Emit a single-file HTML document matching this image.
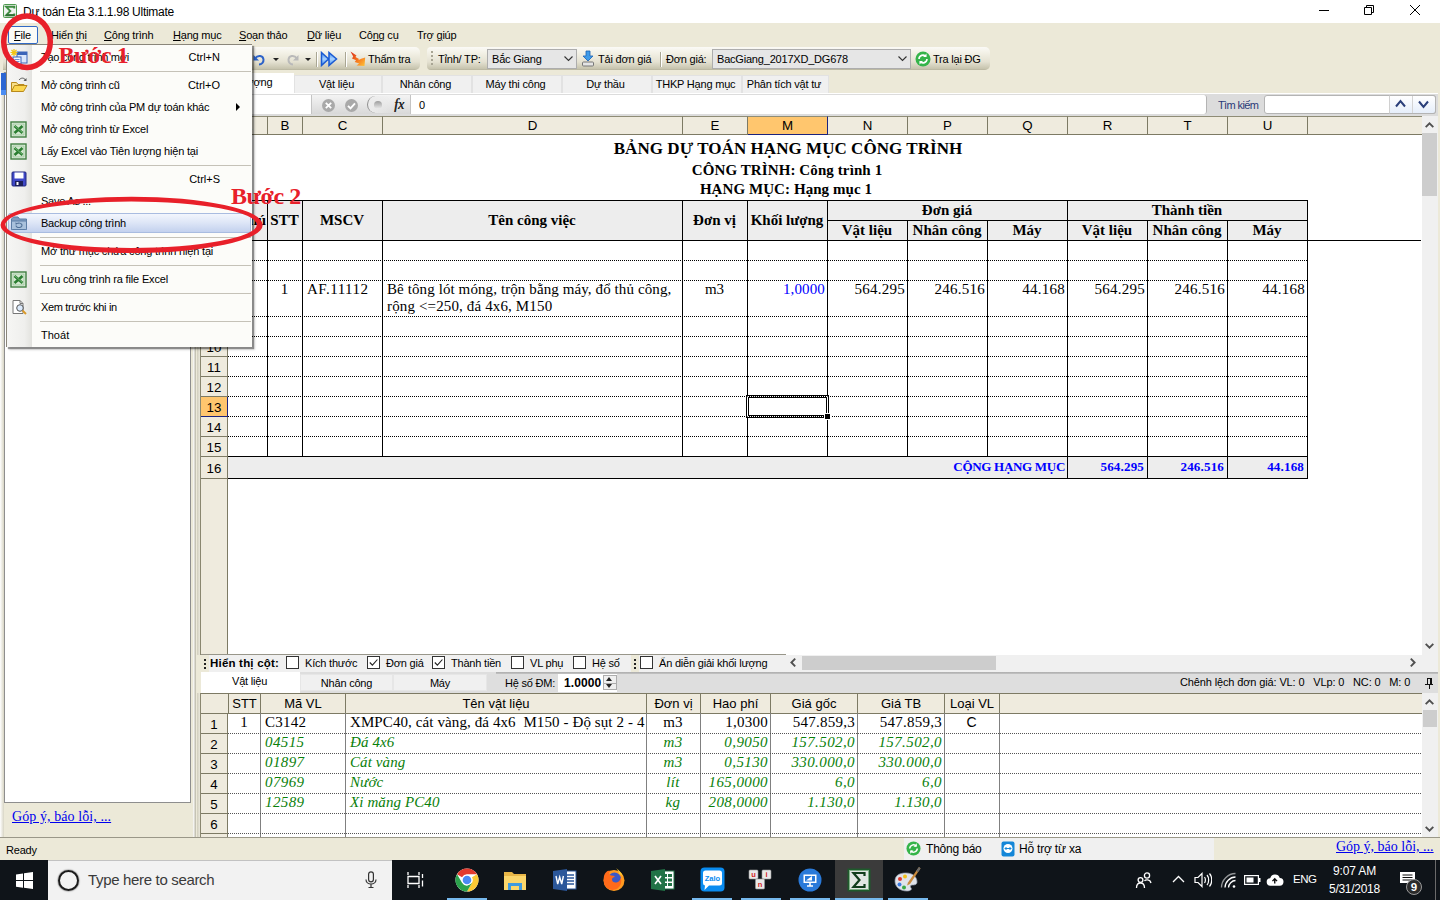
<!DOCTYPE html>
<html lang="vi">
<head>
<meta charset="utf-8">
<title>Dự toán Eta 3.1.1.98 Ultimate</title>
<style>
*{box-sizing:border-box;margin:0;padding:0}
html,body{width:1440px;height:900px;overflow:hidden;background:#ece9d8}
body{position:relative;font-family:"Liberation Sans",sans-serif;font-size:11px;color:#000;letter-spacing:-.2px}
.ser,.c,.hd,.ch,.rh,.lh,.lr,#taskbar,#title{letter-spacing:0}
.abs{position:absolute}
.t{position:absolute;white-space:nowrap;line-height:1}
.ser{font-family:"Liberation Serif",serif}
u{text-decoration:underline}
/* ---------- title bar ---------- */
#title{left:0;top:0;width:1440px;height:23px;background:#fff}
/* ---------- menubar ---------- */
#menubar{left:0;top:23px;width:1440px;height:23px;background:#ece9d8}
#menubar .t{top:7px;font-size:11px}
/* ---------- toolbars ---------- */
.tb{background:linear-gradient(#fbfaf6,#f1efe4 30%,#e4e1d1 65%,#c6c3ad 95%,#b5b29c);border-radius:0 5px 5px 0}
.combo{background:#e6e6e6;border:1px solid #adadad;height:20px}
.combo .t{top:4px;left:4px;font-size:11px}
/* ---------- tabs ---------- */
.tab{position:absolute;top:75px;height:18px;background:#f0f0f0;border:1px solid #e2e2e2;border-bottom:none;padding-right:3px;text-align:center;font-size:11px;line-height:17px;white-space:nowrap}
/* ---------- grid ---------- */
.ch{position:absolute;top:116px;height:19px;background:#efebde;border-top:1px solid #8f8c76;border-right:1px solid #7d7a64;border-bottom:1px solid #7d7a64;text-align:center;font-size:13.300px;line-height:17px}
.rh{position:absolute;left:201px;width:27px;background:#efebde;border-right:1px solid #7d7a64;border-bottom:1px solid #7d7a64;text-align:center;font-size:13.300px;}
.vl{position:absolute;width:1px;background:#000}
.hl{position:absolute;height:1px;background:#000}
.dl{position:absolute;height:1px;background-image:linear-gradient(90deg,#000 50%,transparent 50%);background-size:2px 1px}
.hd{position:absolute;font-family:"Liberation Serif",serif;font-weight:bold;font-size:15px;text-align:center;white-space:nowrap;line-height:1}
.c{position:absolute;font-family:"Liberation Serif",serif;font-size:15px;white-space:nowrap;line-height:1}
.r{text-align:right}
.ctr{text-align:center}
/* lower grid */
.lh{position:absolute;top:693px;height:21px;background:#efebde;border-right:1px solid #7d7a64;border-bottom:1px solid #7d7a64;text-align:center;font-size:13px;line-height:22px;white-space:nowrap}
.lr{position:absolute;left:201px;width:27px;height:20px;background:#efebde;border-right:1px solid #7d7a64;border-bottom:1px solid #7d7a64;text-align:center;font-size:13.300px;line-height:21px}
.g{color:#0a800a;font-style:italic}
.dlg{position:absolute;height:1px;background-image:linear-gradient(90deg,#555 50%,transparent 50%);background-size:2px 1px}
.vlg{position:absolute;width:1px;background:#808080}
/* menu */
#menu{left:6px;top:44px;width:246px;height:303px;background:#fcfcf9;border:1px solid #8a867a;border-right:none;border-bottom:none;box-shadow:2px 2px 1px rgba(0,0,0,.36),3px 3px 2px rgba(0,0,0,.16)}
#menu .strip{position:absolute;left:0;top:0;width:25px;height:100%;background:linear-gradient(90deg,#f6f6f4,#efefed 70%,#e2e2de)}
#menu .mi{position:absolute;left:34px;font-size:11px;white-space:nowrap;line-height:1}
#menu .sc{position:absolute;right:32px;letter-spacing:0;font-size:11px;white-space:nowrap;line-height:1}
#menu .sep{position:absolute;left:33px;right:1px;height:1px;background:#c5c2b8}
/* taskbar */
#taskbar{left:0;top:860px;width:1440px;height:40px;background:#0f1419}
</style>
</head>
<body>

<!-- ================= TITLE BAR ================= -->
<div id="title" class="abs">
  <svg class="abs" style="left:3px;top:4px" width="14" height="14" viewBox="0 0 14 14"><rect x=".5" y=".5" width="13" height="13" rx="1" fill="#eef2ee" stroke="#4f9a50"/><path d="M11.300 4.600V2.800H3.200L7.300 7 3.200 11.200h8.100V9.400" fill="none" stroke="#3f8c41" stroke-width="1.900"/><path d="M3.200 11.200h8.100" stroke="#2f6f33" stroke-width="1.900"/></svg>
  <div class="t" style="left:23px;top:6px;font-size:12px;letter-spacing:-.27px">Dự toán Eta 3.1.1.98 Ultimate</div>
  <svg class="abs" style="left:1300px;top:0" width="140" height="23" viewBox="0 0 140 23" fill="none" stroke="#000" stroke-width="1">
    <path d="M19 10.5h10"/>
    <path d="M64.5 7.5h7v7h-7z M66.500 7.500v-2h7v7h-2"/>
    <path d="M110 5l10 10M120 5l-10 10"/>
  </svg>
</div>

<!-- ================= MENU BAR ================= -->
<div id="menubar" class="abs">
  <div class="abs" style="left:8px;top:3px;width:30px;height:18px;border:1px solid #316ac5;border-radius:2px;background:#fbfbf7"></div>
  <div class="t" style="left:14px"><u>F</u>ile</div>
  <div class="t" style="left:51px">Hiển <u>t</u>hị</div>
  <div class="t" style="left:104px"><u>C</u>ông trình</div>
  <div class="t" style="left:173px"><u>H</u>ạng mục</div>
  <div class="t" style="left:239px"><u>S</u>oạn thảo</div>
  <div class="t" style="left:307px"><u>D</u>ữ liệu</div>
  <div class="t" style="left:359px">Cô<u>n</u>g cụ</div>
  <div class="t" style="left:417px">Trợ <u>g</u>iúp</div>
</div>

<!-- ================= TOOLBARS ================= -->
<div class="abs tb" style="left:3px;top:47px;width:417px;height:23px"></div>
<div class="abs tb" style="left:427px;top:47px;width:563px;height:23px;border-radius:4px 5px 5px 4px"></div>
<div id="toolbar-items">
  <!-- undo / redo -->
  <svg class="abs" style="left:252px;top:51px" width="16" height="16" viewBox="0 0 16 16"><path d="M3 7.500c3-4 8-3 8.500 1 .3 3-2 5-4.500 5" fill="none" stroke="#2c62c8" stroke-width="2"/><path d="M1.500 4v5.500h5.500z" fill="#2c62c8"/></svg>
  <div class="abs" style="left:273px;top:58px;border:3px solid transparent;border-top:3px solid #222;width:0;height:0"></div>
  <svg class="abs" style="left:284px;top:51px" width="16" height="16" viewBox="0 0 16 16"><path d="M13 7.500c-3-4-8-3-8.500 1-.3 3 2 5 4.500 5" fill="none" stroke="#b9b9b9" stroke-width="2"/><path d="M14.500 4v5.500h-5.500z" fill="#b9b9b9"/></svg>
  <div class="abs" style="left:305px;top:58px;border:3px solid transparent;border-top:3px solid #222;width:0;height:0"></div>
  <div class="abs" style="left:316px;top:52px;width:2px;height:15px;background:linear-gradient(90deg,#a9a693 50%,#fff 50%)"></div>
  <svg class="abs" style="left:320px;top:51px" width="18" height="16" viewBox="0 0 18 16"><defs><linearGradient id="ffg" x1="0" y1="0" x2="0" y2="1"><stop offset="0" stop-color="#3f8df0"/><stop offset=".5" stop-color="#a9d2ff"/><stop offset="1" stop-color="#3f8df0"/></linearGradient></defs><path d="M1.500 1.500l7 6.500-7 6.500zM9 1.500l7.500 6.500-7.500 6.500z" fill="url(#ffg)" stroke="#1a5ad2" stroke-width="1.500"/></svg>
  <div class="abs" style="left:345px;top:52px;width:2px;height:15px;background:linear-gradient(90deg,#a9a693 50%,#fff 50%)"></div>
  <svg class="abs" style="left:350px;top:51px" width="16" height="16" viewBox="0 0 16 16"><defs><linearGradient id="ttg" x1="0" y1="0" x2="1" y2="1"><stop offset="0" stop-color="#d8281c"/><stop offset=".55" stop-color="#f7791e"/><stop offset="1" stop-color="#ffc63a"/></linearGradient></defs><path d="M.5.500l6 4-1 1.500 3.500 2-.8 1.300 3-1.500 4-1.300-.7 8.500-8-.5 2.700-2-4.500-1.500 1.300-1.800-4-1.800 1.200-2z" fill="url(#ttg)"/></svg>
  <div class="t" style="left:368px;top:54px;font-size:11px">Thẩm tra</div>
  <!-- toolbar 2 -->
  <div class="abs" style="left:431px;top:51px;width:2px;height:16px;background-image:linear-gradient(#a8a594 50%,transparent 50%);background-size:2px 4px"></div>
  <div class="t" style="left:438px;top:54px;font-size:11px">Tỉnh/ TP:</div>
  <div class="abs combo" style="left:487px;top:49px;width:90px"><div class="t">Bắc Giang</div>
    <svg class="abs" style="right:3px;top:6px" width="9" height="6" viewBox="0 0 9 6"><path d="M.5.500l4 4 4-4" fill="none" stroke="#333" stroke-width="1.100"/></svg></div>
  <svg class="abs" style="left:581px;top:50px" width="14" height="17" viewBox="0 0 14 17"><path d="M5 1h4v5h3l-5 5-5-5h3z" fill="#3f9be8" stroke="#1d62b5" stroke-width=".8"/><rect x="1.500" y="12" width="11" height="4" rx="1" fill="#e4e4e4" stroke="#777"/></svg>
  <div class="t" style="left:598px;top:54px;font-size:11px">Tải đơn giá</div>
  <div class="abs" style="left:660px;top:52px;width:2px;height:15px;background:linear-gradient(90deg,#a9a693 50%,#fff 50%)"></div>
  <div class="t" style="left:666px;top:54px;font-size:11px">Đơn giá:</div>
  <div class="abs combo" style="left:712px;top:49px;width:199px"><div class="t">BacGiang_2017XD_DG678</div>
    <svg class="abs" style="right:3px;top:6px" width="9" height="6" viewBox="0 0 9 6"><path d="M.5.500l4 4 4-4" fill="none" stroke="#333" stroke-width="1.100"/></svg></div>
  <svg class="abs" style="left:915px;top:51px" width="16" height="16" viewBox="0 0 16 16"><circle cx="8" cy="8" r="7.500" fill="#35b44a"/><path d="M4 8a4 4 0 0 1 7-2.500M12 8a4 4 0 0 1-7 2.500" fill="none" stroke="#fff" stroke-width="1.600"/><path d="M11.500 2.500v3.500h-3.500zM4.500 13.500v-3.500h3.500z" fill="#fff"/></svg>
  <div class="t" style="left:933px;top:54px;font-size:11px">Tra lại ĐG</div>
</div>

<!-- ================= LEFT PANEL ================= -->
<div class="abs" style="left:0;top:72px;width:197px;height:766px;background:#ece9d8"></div>
<div class="abs" style="left:0;top:72px;width:4px;height:766px;background:linear-gradient(90deg,#fff,#d8d5c4)"></div>
<div class="abs" style="left:4px;top:72px;width:187px;height:731px;background:#fff;border:1px solid #8e8e8e"></div>
<div class="abs" style="left:1px;top:73px;width:11px;height:22px;background:linear-gradient(#2c66d2 75%,#4a8cf2 75%)"></div>
<div class="t ser" style="left:12px;top:810px;font-size:14px;letter-spacing:.08px;color:#0000ee;text-decoration:underline">Góp ý, báo lỗi, ...</div>
<div class="abs" style="left:193px;top:72px;width:3px;height:766px;background:linear-gradient(90deg,#fff,#bab7a6)"></div>

<!-- ================= SHEET TABS ================= -->
<div id="tabs">
  <div class="abs" style="left:197px;top:93px;width:1243px;height:1px;background:#fff"></div>
  <div class="abs" style="left:201px;top:73px;width:93px;height:21px;background:#fff"></div>
  <div class="t" style="left:221px;top:77px;font-size:11px">Tiên lượng</div>
  <div class="tab" style="left:294px;width:88px">Vật liệu</div>
  <div class="tab" style="left:382px;width:90px">Nhân công</div>
  <div class="tab" style="left:472px;width:90px">Máy thi công</div>
  <div class="tab" style="left:562px;width:90px">Dự thầu</div>
  <div class="tab" style="left:652px;width:90px">THKP Hạng mục</div>
  <div class="tab" style="left:742px;width:87px">Phân tích vật tư</div>
</div>
<!-- ================= FORMULA BAR ================= -->
<div id="fbar">
  <div class="abs" style="left:197px;top:94px;width:1243px;height:22px;background:#dcdcdc"></div>
  <div class="abs" style="left:201px;top:95px;width:110px;height:19px;background:#fff"></div>
  <div class="abs" style="left:311px;top:95px;width:100px;height:19px;background:linear-gradient(#f4f4f4,#d8d8d8);border-left:1px solid #c4c4c4;border-right:1px solid #c4c4c4"></div>
  <svg class="abs" style="left:321px;top:98px" width="15" height="15" viewBox="0 0 15 15"><circle cx="7.500" cy="7.500" r="6.500" fill="#a9a9a9"/><path d="M4.800 4.800l5.400 5.400M10.200 4.800l-5.400 5.400" stroke="#fff" stroke-width="1.800"/></svg>
  <svg class="abs" style="left:344px;top:98px" width="15" height="15" viewBox="0 0 15 15"><circle cx="7.500" cy="7.500" r="6.500" fill="#a9a9a9"/><path d="M4 7.800l2.500 2.500 4.500-5" fill="none" stroke="#fff" stroke-width="1.900"/></svg>
  <div class="abs" style="left:367px;top:96px;width:30px;height:17px;border-left:1px solid #8f8f8f;border-radius:9px 0 0 9px;background:linear-gradient(90deg,#ececec,rgba(236,236,236,0))"></div>
  <div class="abs" style="left:374px;top:101px;width:8px;height:8px;border-radius:50%;background:linear-gradient(#9d9d9d,#ececec)"></div>
  <div class="t ser" style="left:394px;top:98px;font-size:14px;font-style:italic;color:#222;text-shadow:.4px 0 0 #222">fx</div>
  <div class="abs" style="left:411px;top:95px;width:796px;height:19px;background:#fff;border-radius:0 3px 3px 0;border-right:1px solid #b4b4b4"></div>
  <div class="t" style="left:419px;top:100px;font-size:11px">0</div>
  <div class="t" style="left:1218px;top:100px;font-size:11px;letter-spacing:-.6px;color:#2a3a78">Tìm kiếm</div>
  <div class="abs" style="left:1264px;top:95px;width:172px;height:19px;background:#fff;border:1px solid #b4b4b4;border-radius:3px"></div>
  <div class="abs" style="left:1389px;top:95px;width:47px;height:19px;background:linear-gradient(#fff,#e6eefa);border:1px solid #b4b4b4;border-left-color:#d0d0d0;border-radius:0 3px 3px 0"></div>
  <div class="abs" style="left:1412px;top:96px;width:1px;height:17px;background:#d4d4d4"></div>
  <svg class="abs" style="left:1395px;top:99px" width="11" height="9" viewBox="0 0 11 9"><path d="M1 7.500l4.500-5.500 4.500 5.500" fill="none" stroke="#2b3f7a" stroke-width="2"/></svg>
  <svg class="abs" style="left:1418px;top:100px" width="11" height="9" viewBox="0 0 11 9"><path d="M1 1.500l4.500 5.500 4.500-5.500" fill="none" stroke="#2b3f7a" stroke-width="2"/></svg>
</div>

<!-- ================= MAIN GRID ================= -->
<div id="grid">
<div class="abs" style="left:197px;top:116px;width:4px;height:539px;background:linear-gradient(90deg,#d0cdbc,#f4f2e8)"></div>
<div class="abs" style="left:200px;top:116px;width:1px;height:539px;background:#8a8770"></div>
<div class="abs" style="left:201px;top:116px;width:1221px;height:539px;background:#fff"></div>
<div class="abs" style="left:201px;top:116px;width:1221px;height:19px;background:#efebde;border-top:1px solid #8f8c76;border-bottom:1px solid #7d7a64"></div>
<div class="ch" style="left:201px;width:27px"></div>
<div class="ch" style="left:228px;width:40px">A</div>
<div class="ch" style="left:268px;width:35px">B</div>
<div class="ch" style="left:303px;width:80px">C</div>
<div class="ch" style="left:383px;width:300px">D</div>
<div class="ch" style="left:683px;width:65px">E</div>
<div class="ch" style="left:748px;width:80px;background:#ffc66e;border-bottom:1px solid #1a237e;border-right:1px solid #1a237e">M</div>
<div class="ch" style="left:828px;width:80px">N</div>
<div class="ch" style="left:908px;width:80px">P</div>
<div class="ch" style="left:988px;width:80px">Q</div>
<div class="ch" style="left:1068px;width:80px">R</div>
<div class="ch" style="left:1148px;width:80px">T</div>
<div class="ch" style="left:1228px;width:80px">U</div>
<div class="abs" style="left:201px;top:135px;width:27px;height:520px;background:#efebde;border-right:1px solid #7d7a64"></div>
<div class="rh" style="top:337px;height:20px;line-height:21px">10</div>
<div class="rh" style="top:357px;height:20px;line-height:21px">11</div>
<div class="rh" style="top:377px;height:20px;line-height:21px">12</div>
<div class="rh" style="top:397px;height:20px;line-height:21px;background:#ffc66e;border-bottom:1px solid #1a237e;border-right:1px solid #1a237e">13</div>
<div class="rh" style="top:417px;height:20px;line-height:21px">14</div>
<div class="rh" style="top:437px;height:20px;line-height:21px">15</div>
<div class="rh" style="top:457px;height:22px;line-height:23px">16</div>
<div class="abs" style="left:201px;top:336px;width:27px;height:1px;background:#7d7a64"></div>
<div class="hd" style="left:488px;width:600px;top:140px;font-size:17px;letter-spacing:.05px">BẢNG DỰ TOÁN HẠNG MỤC CÔNG TRÌNH</div>
<div class="hd" style="left:487px;width:600px;top:163px;font-size:15px;letter-spacing:.1px">CÔNG TRÌNH: Công trình 1</div>
<div class="hd" style="left:486px;width:600px;top:182px;font-size:15px;letter-spacing:.07px">HẠNG MỤC: Hạng mục 1</div>
<div class="abs" style="left:228px;top:200px;width:1080px;height:41px;background:#ededed"></div>
<div class="abs" style="left:228px;top:457px;width:1080px;height:22px;background:#ededed"></div>
<div class="hl" style="left:228px;top:200px;width:1080px"></div>
<div class="hl" style="left:827px;top:220px;width:481px"></div>
<div class="hl" style="left:228px;top:240px;width:1193px"></div>
<div class="hl" style="left:228px;top:456px;width:1080px"></div>
<div class="hl" style="left:228px;top:478px;width:1080px"></div>
<div class="dl" style="left:228px;top:260px;width:1080px"></div>
<div class="dl" style="left:228px;top:280px;width:1080px"></div>
<div class="dl" style="left:228px;top:316px;width:1080px"></div>
<div class="dl" style="left:228px;top:336px;width:1080px"></div>
<div class="dl" style="left:228px;top:356px;width:1080px"></div>
<div class="dl" style="left:228px;top:376px;width:1080px"></div>
<div class="dl" style="left:228px;top:396px;width:1080px"></div>
<div class="dl" style="left:228px;top:416px;width:1080px"></div>
<div class="dl" style="left:228px;top:436px;width:1080px"></div>
<div class="vl" style="left:267px;top:200px;height:257px"></div>
<div class="vl" style="left:302px;top:200px;height:257px"></div>
<div class="vl" style="left:382px;top:200px;height:257px"></div>
<div class="vl" style="left:682px;top:200px;height:257px"></div>
<div class="vl" style="left:747px;top:200px;height:257px"></div>
<div class="vl" style="left:827px;top:200px;height:257px"></div>
<div class="vl" style="left:907px;top:220px;height:237px"></div>
<div class="vl" style="left:987px;top:220px;height:237px"></div>
<div class="vl" style="left:1147px;top:220px;height:237px"></div>
<div class="vl" style="left:1227px;top:220px;height:237px"></div>
<div class="vl" style="left:1067px;top:200px;height:279px"></div>
<div class="vl" style="left:1307px;top:200px;height:279px"></div>
<div class="vl" style="left:1147px;top:457px;height:22px"></div>
<div class="vl" style="left:1227px;top:457px;height:22px"></div>
<div class="abs" style="left:229px;top:201px;width:38px;height:39px;overflow:hidden"><div class="hd" style="right:1px;top:12px">Ghi chú</div></div>
<div class="hd" style="left:267px;width:35px;top:213px;font-size:15px">STT</div>
<div class="hd" style="left:302px;width:80px;top:213px;font-size:15px">MSCV</div>
<div class="hd" style="left:382px;width:300px;top:213px;font-size:15px">Tên công việc</div>
<div class="hd" style="left:682px;width:65px;top:213px;font-size:15px">Đơn vị</div>
<div class="hd" style="left:747px;width:80px;top:213px;font-size:15px">Khối lượng</div>
<div class="hd" style="left:827px;width:240px;top:203px;font-size:15px">Đơn giá</div>
<div class="hd" style="left:1067px;width:240px;top:203px;font-size:15px">Thành tiền</div>
<div class="hd" style="left:827px;width:80px;top:223px;font-size:15px">Vật liệu</div>
<div class="hd" style="left:907px;width:80px;top:223px;font-size:15px">Nhân công</div>
<div class="hd" style="left:987px;width:80px;top:223px;font-size:15px">Máy</div>
<div class="hd" style="left:1067px;width:80px;top:223px;font-size:15px">Vật liệu</div>
<div class="hd" style="left:1147px;width:80px;top:223px;font-size:15px">Nhân công</div>
<div class="hd" style="left:1227px;width:80px;top:223px;font-size:15px">Máy</div>
<div class="c ctr" style="left:267px;width:35px;top:282px">1</div>
<div class="c" style="left:307px;top:282px;letter-spacing:.5px">AF.11112</div>
<div class="c" style="left:387px;top:282px;letter-spacing:.1px">Bê tông lót móng, trộn bằng máy, đổ thủ công,</div>
<div class="c" style="left:387px;top:299px;letter-spacing:.14px">rộng &lt;=250, đá 4x6, M150</div>
<div class="c ctr" style="left:682px;width:65px;top:282px">m3</div>
<div class="c r" style="left:747px;width:78px;top:282px;letter-spacing:.14px;color:#0000ff">1,0000</div>
<div class="c r" style="left:827px;width:78px;top:282px;letter-spacing:.24px">564.295</div>
<div class="c r" style="left:907px;width:78px;top:282px;letter-spacing:.24px">246.516</div>
<div class="c r" style="left:987px;width:78px;top:282px;letter-spacing:.24px">44.168</div>
<div class="c r" style="left:1067px;width:78px;top:282px;letter-spacing:.24px">564.295</div>
<div class="c r" style="left:1147px;width:78px;top:282px;letter-spacing:.24px">246.516</div>
<div class="c r" style="left:1227px;width:78px;top:282px;letter-spacing:.24px">44.168</div>
<div class="c r" style="left:867px;width:198px;top:460px;font-size:13px;font-weight:bold;letter-spacing:-.3px;color:#0000ff">CỘNG HẠNG MỤC</div>
<div class="c r" style="left:1067px;width:77px;top:460px;font-size:13px;font-weight:bold;letter-spacing:.18px;color:#0000ff">564.295</div>
<div class="c r" style="left:1147px;width:77px;top:460px;font-size:13px;font-weight:bold;letter-spacing:.18px;color:#0000ff">246.516</div>
<div class="c r" style="left:1227px;width:77px;top:460px;font-size:13px;font-weight:bold;letter-spacing:.18px;color:#0000ff">44.168</div>
<div class="abs" style="left:746px;top:395px;width:83px;height:23px;border:1px solid #000;background:#fff"></div>
<div class="abs" style="left:747px;top:396px;width:81px;height:21px;border-top:1px dotted #000;border-bottom:1px dotted #000;border-left:1px solid #fff;border-right:1px solid #fff"></div>
<div class="abs" style="left:748px;top:397px;width:79px;height:19px;border:1px solid #000;background:#fff"></div>
<div class="abs" style="left:824px;top:413px;width:7px;height:7px;background:#000;border:1px solid #fff"></div>
<div class="abs" style="left:1422px;top:116px;width:16px;height:556px;background:#f0f0f0"></div>
<div class="abs" style="left:1422px;top:133px;width:15px;height:63px;background:#cdcdcd"></div>
<svg class="abs" style="left:1425px;top:122px" width="9" height="6" viewBox="0 0 9 6"><path d="M.7 5.200l3.800-3.800 3.800 3.800" fill="none" stroke="#505050" stroke-width="1.900"/></svg>
<svg class="abs" style="left:1425px;top:643px" width="9" height="6" viewBox="0 0 9 6"><path d="M.7.800l3.800 3.800 3.800-3.800" fill="none" stroke="#505050" stroke-width="1.900"/></svg>
<div class="abs" style="left:1438px;top:72px;width:2px;height:766px;background:#ece9d8"></div>
</div>

<!-- ================= LOWER PANE ================= -->
<div id="lower">
<div class="abs" style="left:197px;top:655px;width:4px;height:38px;background:#ece9d8"></div>
<div class="abs" style="left:201px;top:655px;width:585px;height:17px;background:#f0f0f0"></div>
<div class="abs" style="left:201px;top:654px;width:585px;height:1px;background:#98968a"></div>
<div class="abs" style="left:201px;top:655px;width:8px;height:17px;background:#ece9d8"></div>
<div class="abs" style="left:631px;top:655px;width:8px;height:17px;background:#ece9d8"></div>
<div class="abs" style="left:204px;top:659px;width:2px;height:10px;background-image:linear-gradient(#222 50%,transparent 50%);background-size:2px 4px"></div>
<div class="t" style="left:210px;top:658px;font-size:11.500px;font-weight:bold;letter-spacing:.2px">Hiển thị cột:</div>
<div class="abs" style="left:286px;top:656px;width:13px;height:13px;background:#fff;border:1px solid #333"></div>
<div class="t" style="left:305px;top:658px;font-size:11px">Kích thước</div>
<div class="abs" style="left:367px;top:656px;width:13px;height:13px;background:#fff;border:1px solid #333"></div>
<svg class="abs" style="left:367px;top:656px" width="13" height="13" viewBox="0 0 13 13"><path d="M2.800 6.500l2.600 2.700 5-5.700" fill="none" stroke="#222" stroke-width="1.100"/></svg>
<div class="t" style="left:386px;top:658px;font-size:11px">Đơn giá</div>
<div class="abs" style="left:432px;top:656px;width:13px;height:13px;background:#fff;border:1px solid #333"></div>
<svg class="abs" style="left:432px;top:656px" width="13" height="13" viewBox="0 0 13 13"><path d="M2.800 6.500l2.600 2.700 5-5.700" fill="none" stroke="#222" stroke-width="1.100"/></svg>
<div class="t" style="left:451px;top:658px;font-size:11px">Thành tiền</div>
<div class="abs" style="left:511px;top:656px;width:13px;height:13px;background:#fff;border:1px solid #333"></div>
<div class="t" style="left:530px;top:658px;font-size:11px">VL phụ</div>
<div class="abs" style="left:573px;top:656px;width:13px;height:13px;background:#fff;border:1px solid #333"></div>
<div class="t" style="left:592px;top:658px;font-size:11px">Hệ số</div>
<div class="abs" style="left:634px;top:659px;width:2px;height:10px;background-image:linear-gradient(#222 50%,transparent 50%);background-size:2px 4px"></div>
<div class="abs" style="left:640px;top:656px;width:13px;height:13px;background:#fff;border:1px solid #333"></div>
<div class="t" style="left:659px;top:658px;font-size:11px">Ẩn diễn giải khối lượng</div>
<div class="abs" style="left:786px;top:655px;width:636px;height:17px;background:#f0f0f0"></div>
<div class="abs" style="left:802px;top:656px;width:194px;height:14px;background:#cdcdcd"></div>
<svg class="abs" style="left:790px;top:658px" width="6" height="9" viewBox="0 0 6 9"><path d="M5.200.700l-3.800 3.800 3.800 3.800" fill="none" stroke="#505050" stroke-width="1.900"/></svg>
<svg class="abs" style="left:1410px;top:658px" width="6" height="9" viewBox="0 0 6 9"><path d="M.800.700l3.800 3.800-3.800 3.800" fill="none" stroke="#505050" stroke-width="1.900"/></svg>
<div class="abs" style="left:201px;top:672px;width:1237px;height:21px;background:#dedede"></div>
<div class="abs" style="left:496px;top:672px;width:942px;height:2px;background:linear-gradient(#adadad,#c4c4c4)"></div>
<div class="abs" style="left:201px;top:672px;width:99px;height:21px;background:#fff"></div>
<div class="t" style="left:232px;top:676px;font-size:11px">Vật liệu</div>
<div class="abs" style="left:300px;top:674px;width:93px;height:17px;background:#f0f0f0;border:1px solid #e6e6e6;text-align:center;line-height:16px;font-size:11px">Nhân công</div>
<div class="abs" style="left:393px;top:674px;width:94px;height:17px;background:#f0f0f0;border:1px solid #e6e6e6;text-align:center;line-height:16px;font-size:11px">Máy</div>
<div class="t" style="left:505px;top:678px;font-size:11px">Hệ số ĐM:</div>
<div class="abs" style="left:558px;top:674px;width:59px;height:18px;background:#fff"></div>
<div class="t" style="left:564px;top:677px;font-size:12px;font-weight:bold;letter-spacing:.1px">1.0000</div>
<div class="abs" style="left:603px;top:675px;width:14px;height:15px;background:linear-gradient(#f0f0f0 0 7px,#adadad 7px 8px,#f0f0f0 8px);border:1px solid #adadad"></div>
<div class="abs" style="left:606px;top:677px;border:3px solid transparent;border-top:none;border-bottom:4px solid #222;width:0;height:0"></div>
<div class="abs" style="left:606px;top:684px;border:3px solid transparent;border-bottom:none;border-top:4px solid #222;width:0;height:0"></div>
<div class="t" style="left:1180px;top:677px;font-size:11px;letter-spacing:-.13px">Chênh lệch đơn giá: VL: 0&nbsp;&nbsp; VLp: 0&nbsp;&nbsp; NC: 0&nbsp;&nbsp; M: 0</div>
<svg class="abs" style="left:1424px;top:677px" width="10" height="12" viewBox="0 0 10 12" shape-rendering="crispEdges"><path d="M3.500 1.500h4v6h-4zM6.500 1.500v6M1 7.500h8M5.500 7.500v4" fill="none" stroke="#111" stroke-width="1"/></svg>
<div class="abs" style="left:197px;top:693px;width:4px;height:145px;background:linear-gradient(90deg,#d0cdbc,#f4f2e8)"></div>
<div class="abs" style="left:200px;top:693px;width:1px;height:145px;background:#8a8770"></div>
<div class="abs" style="left:201px;top:693px;width:1221px;height:145px;background:#fff"></div>
<div class="abs" style="left:201px;top:693px;width:1221px;height:1px;background:#7d7a64;z-index:2"></div>
<div class="abs" style="left:201px;top:693px;width:1221px;height:21px;background:#efebde;border-bottom:1px solid #7d7a64"></div>
<div class="lh" style="left:201px;width:28px"></div>
<div class="lh" style="left:229px;width:32px">STT</div>
<div class="lh" style="left:261px;width:85px">Mã VL</div>
<div class="lh" style="left:346px;width:301px">Tên vật liệu</div>
<div class="lh" style="left:647px;width:54px">Đơn vị</div>
<div class="lh" style="left:701px;width:70px">Hao phí</div>
<div class="lh" style="left:771px;width:87px">Giá gốc</div>
<div class="lh" style="left:858px;width:87px">Giá TB</div>
<div class="lh" style="left:945px;width:55px">Loại VL</div>
<div class="abs" style="left:201px;top:714px;width:27px;height:124px;background:#efebde;border-right:1px solid #7d7a64"></div>
<div class="lr" style="top:714px">1</div>
<div class="lr" style="top:734px">2</div>
<div class="lr" style="top:754px">3</div>
<div class="lr" style="top:774px">4</div>
<div class="lr" style="top:794px">5</div>
<div class="lr" style="top:814px">6</div>
<div class="vlg" style="left:260px;top:713px;height:125px"></div>
<div class="vlg" style="left:345px;top:713px;height:125px"></div>
<div class="vlg" style="left:646px;top:713px;height:125px"></div>
<div class="vlg" style="left:700px;top:713px;height:125px"></div>
<div class="vlg" style="left:770px;top:713px;height:125px"></div>
<div class="vlg" style="left:857px;top:713px;height:125px"></div>
<div class="vlg" style="left:944px;top:713px;height:125px"></div>
<div class="vlg" style="left:999px;top:713px;height:125px"></div>
<div class="dlg" style="left:228px;top:733px;width:1194px"></div>
<div class="dlg" style="left:228px;top:753px;width:1194px"></div>
<div class="dlg" style="left:228px;top:773px;width:1194px"></div>
<div class="dlg" style="left:228px;top:793px;width:1194px"></div>
<div class="dlg" style="left:228px;top:813px;width:1194px"></div>
<div class="dlg" style="left:228px;top:833px;width:1194px"></div>
<div class="c ctr" style="left:228px;width:32px;top:715px">1</div>
<div class="c" style="left:265px;top:715px;letter-spacing:.25px">C3142</div>
<div class="c" style="left:350px;top:715px;letter-spacing:.1px">XMPC40, cát vàng, đá 4x6&nbsp; M150 - Độ sụt 2 - 4</div>
<div class="c ctr" style="left:646px;width:54px;top:715px;letter-spacing:.25px">m3</div>
<div class="c r" style="left:700px;width:68px;top:715px;letter-spacing:.25px">1,0300</div>
<div class="c r" style="left:770px;width:85px;top:715px;letter-spacing:.25px">547.859,3</div>
<div class="c r" style="left:857px;width:85px;top:715px;letter-spacing:.25px">547.859,3</div>
<div class="c ctr" style="left:944px;width:55px;top:715px;font-family:'Liberation Sans',sans-serif;font-size:14px">C</div>
<div class="c g" style="left:265px;top:735px;letter-spacing:.4px">04515</div>
<div class="c g" style="left:350px;top:735px;letter-spacing:.1px">Đá 4x6</div>
<div class="c g ctr" style="left:646px;width:54px;top:735px;letter-spacing:.4px">m3</div>
<div class="c g r" style="left:700px;width:68px;top:735px;letter-spacing:.4px">0,9050</div>
<div class="c g r" style="left:770px;width:85px;top:735px;letter-spacing:.4px">157.502,0</div>
<div class="c g r" style="left:857px;width:85px;top:735px;letter-spacing:.4px">157.502,0</div>
<div class="c g" style="left:265px;top:755px;letter-spacing:.4px">01897</div>
<div class="c g" style="left:350px;top:755px;letter-spacing:.1px">Cát vàng</div>
<div class="c g ctr" style="left:646px;width:54px;top:755px;letter-spacing:.4px">m3</div>
<div class="c g r" style="left:700px;width:68px;top:755px;letter-spacing:.4px">0,5130</div>
<div class="c g r" style="left:770px;width:85px;top:755px;letter-spacing:.4px">330.000,0</div>
<div class="c g r" style="left:857px;width:85px;top:755px;letter-spacing:.4px">330.000,0</div>
<div class="c g" style="left:265px;top:775px;letter-spacing:.4px">07969</div>
<div class="c g" style="left:350px;top:775px;letter-spacing:.1px">Nước</div>
<div class="c g ctr" style="left:646px;width:54px;top:775px;letter-spacing:.4px">lít</div>
<div class="c g r" style="left:700px;width:68px;top:775px;letter-spacing:.4px">165,0000</div>
<div class="c g r" style="left:770px;width:85px;top:775px;letter-spacing:.4px">6,0</div>
<div class="c g r" style="left:857px;width:85px;top:775px;letter-spacing:.4px">6,0</div>
<div class="c g" style="left:265px;top:795px;letter-spacing:.4px">12589</div>
<div class="c g" style="left:350px;top:795px;letter-spacing:.1px">Xi măng PC40</div>
<div class="c g ctr" style="left:646px;width:54px;top:795px;letter-spacing:.4px">kg</div>
<div class="c g r" style="left:700px;width:68px;top:795px;letter-spacing:.4px">208,0000</div>
<div class="c g r" style="left:770px;width:85px;top:795px;letter-spacing:.4px">1.130,0</div>
<div class="c g r" style="left:857px;width:85px;top:795px;letter-spacing:.4px">1.130,0</div>
<div class="abs" style="left:1422px;top:693px;width:16px;height:145px;background:#f0f0f0"></div>
<div class="abs" style="left:1423px;top:710px;width:14px;height:17px;background:#cdcdcd"></div>
<svg class="abs" style="left:1425px;top:699px" width="9" height="6" viewBox="0 0 9 6"><path d="M.7 5.200l3.800-3.800 3.800 3.800" fill="none" stroke="#505050" stroke-width="1.900"/></svg>
<svg class="abs" style="left:1425px;top:826px" width="9" height="6" viewBox="0 0 9 6"><path d="M.7.800l3.800 3.800 3.800-3.800" fill="none" stroke="#505050" stroke-width="1.900"/></svg>
</div>
<!-- ================= STATUS BAR ================= -->
<div id="status">
<div class="abs" style="left:0;top:837px;width:1440px;height:1px;background:#9a9788"></div>
<div class="abs" style="left:0;top:838px;width:1440px;height:22px;background:#ece9d8"></div>
<div class="t" style="left:6px;top:845px;font-size:11px">Ready</div>
<div class="abs" style="left:904px;top:838px;width:310px;height:22px;background:#f0f0f0"></div>
<svg class="abs" style="left:906px;top:841px" width="15" height="15" viewBox="0 0 16 16"><circle cx="8" cy="8" r="7.500" fill="#35b44a"/><path d="M4 8a4 4 0 0 1 7-2.500M12 8a4 4 0 0 1-7 2.500" fill="none" stroke="#fff" stroke-width="1.600"/><path d="M11.500 2.500v3.500h-3.500zM4.500 13.500v-3.500h3.500z" fill="#fff"/></svg>
<div class="t" style="left:926px;top:843px;font-size:12px">Thông báo</div>
<svg class="abs" style="left:1001px;top:841px" width="14" height="16" viewBox="0 0 14 16"><rect x=".5" y=".5" width="13" height="15" rx="2" fill="#1587d8"/><circle cx="7" cy="7.500" r="4.500" fill="#fff"/><path d="M4 7.500h6M5.500 6l-1.500 1.500 1.500 1.500M8.500 6l1.500 1.500-1.500 1.500" fill="none" stroke="#1587d8" stroke-width="1"/></svg>
<div class="t" style="left:1019px;top:843px;font-size:12px">Hỗ trợ từ xa</div>
<div class="t ser" style="left:1336px;top:840px;font-size:14px;color:#0000ee;text-decoration:underline">Góp ý, báo lỗi, ...</div>
</div>

<!-- ================= TASKBAR ================= -->
<div id="taskbar" class="abs">
  <!-- start -->
  <svg class="abs" style="left:16px;top:12px" width="17" height="17" viewBox="0 0 17 17" fill="#fff"><path d="M0 2.400l7-1v6.700h-7zM8 1.300l9-1.300v8.100h-9zM0 9h7v6.700l-7-1zM8 9h9v8l-9-1.300z"/></svg>
  <!-- search box -->
  <div class="abs" style="left:48px;top:0;width:344px;height:40px;background:#f2f2f2;border-top:1px solid #c2c2c2"></div>
  <div class="abs" style="left:58px;top:10px;width:21px;height:21px;border-radius:50%;border:2.500px solid #1a1a1a;box-shadow:0 0 1.500px #000"></div>
  <div class="t" style="left:88px;top:12px;font-size:15px;color:#3a3a3a;letter-spacing:-.33px">Type here to search</div>
  <svg class="abs" style="left:365px;top:11px" width="12" height="18" viewBox="0 0 12 18" fill="none" stroke="#333" stroke-width="1.200"><rect x="3.600" y=".8" width="4.800" height="10" rx="2.400"/><path d="M1 8.500c0 6 10 6 10 0M6 13v3.500M3.500 16.500h5"/></svg>
  <!-- task view -->
  <svg class="abs" style="left:407px;top:11px" width="18" height="18" viewBox="0 0 18 18" fill="none" stroke="#fff" stroke-width="1.300"><path d="M1 1v3M12 1v3M1 14v3M12 14v3M1 5.500h11v7h-11zM15.500 3v4M15.500 9.500v6"/></svg>
  <!-- chrome -->
  <svg class="abs" style="left:455px;top:8px" width="24" height="24" viewBox="0 0 24 24"><circle cx="12" cy="12" r="11.500" fill="#fff"/><path d="M12 .5A11.500 11.500 0 0 1 21.960 6.250H12a5.750 5.750 0 0 0-4.980 2.880L2.040 6.250A11.500 11.500 0 0 1 12 .5z" fill="#e33b2e"/><path d="M21.960 6.250A11.500 11.500 0 0 1 12 23.500l4.980-8.630A5.750 5.750 0 0 0 17.750 12a5.700 5.700 0 0 0-.77-2.870z" fill="#fcc934" transform="rotate(0 12 12)"/><path d="M2.040 6.250l4.980 8.620A5.750 5.750 0 0 0 12 17.750l4.980-2.880L12 23.500A11.500 11.500 0 0 1 2.040 6.250z" fill="#2ba24c"/><circle cx="12" cy="12" r="5.300" fill="#fff"/><circle cx="12" cy="12" r="4.300" fill="#4a8af4"/></svg>
  <!-- explorer -->
  <svg class="abs" style="left:503px;top:9px" width="24" height="22" viewBox="0 0 24 22"><path d="M1 3h8l2 2h12v4H1z" fill="#e8b647"/><path d="M1 7h22v14H1z" fill="#fbd66b"/><path d="M5 14h14v7H5z" fill="#3f9ae0"/><path d="M8 17h8v4H8z" fill="#fbd66b"/></svg>
  <!-- word -->
  <svg class="abs" style="left:553px;top:9px" width="24" height="22" viewBox="0 0 24 22"><rect x="9" y="2" width="14" height="18" fill="#fff" stroke="#2b579a"/><path d="M12 6h9M12 9h9M12 12h9M12 15h9" stroke="#2b579a" stroke-width="1.300"/><path d="M0 2l14-2v22l-14-2z" fill="#2b579a"/><path d="M3 7l1.700 8 2-7 2 7 1.700-8" fill="none" stroke="#fff" stroke-width="1.400"/></svg>
  <!-- firefox -->
  <svg class="abs" style="left:602px;top:7px" width="24" height="25" viewBox="0 0 24 25"><circle cx="12" cy="13.500" r="10.500" fill="#ff9a1f"/><circle cx="12.500" cy="12" r="6.500" fill="#3a59c7"/><path d="M2 9c1-4 4-6 6-5-1 1-1 3 0 4 1.500 1 4 0 5 2-2 0-3 1-3 2.500 0 2 2 3.500 4.500 3 2-.5 4-2 4-5 1.500 3 1 8-3 11-5 3-11 1-13-4-1-3-1-6-.5-8.500z" fill="#ff6a1a"/><path d="M14 1c3 2 6 5 7 9-1-2-3-3-4-3 0-2-1-4-3-6z" fill="#ffcc33"/></svg>
  <!-- excel -->
  <svg class="abs" style="left:651px;top:9px" width="24" height="22" viewBox="0 0 24 22"><rect x="9" y="2" width="14" height="18" fill="#fff" stroke="#217346"/><path d="M12 5h4v3h-4zM17 5h4v3h-4zM12 9.500h4v3h-4zM17 9.500h4v3h-4zM12 14h4v3h-4zM17 14h4v3h-4z" fill="#217346"/><path d="M0 2l14-2v22l-14-2z" fill="#217346"/><path d="M4 7l6 8M10 7l-6 8" stroke="#fff" stroke-width="1.700"/></svg>
  <!-- zalo -->
  <svg class="abs" style="left:700px;top:7px" width="25" height="26" viewBox="0 0 25 26"><rect x=".5" y=".5" width="24" height="24" rx="4" fill="#0a8cf0"/><path d="M3 6a2.500 2.500 0 0 1 2.500-2.500h14A2.500 2.500 0 0 1 22 6v10a2.500 2.500 0 0 1-2.500 2.500H9L4.500 23l.5-4.500A2.500 2.500 0 0 1 3 16z" fill="#fff"/><text x="12.500" y="13.500" font-family="Liberation Sans, sans-serif" font-size="7.500" font-weight="bold" fill="#0a8cf0" text-anchor="middle">Zalo</text></svg>
  <!-- unikey -->
  <svg class="abs" style="left:748px;top:8px" width="25" height="24" viewBox="0 0 25 24"><rect x="1" y="2" width="9" height="9" rx="1" fill="#e9e9e9" stroke="#999" stroke-width=".6"/><rect x="14" y="2" width="9" height="9" rx="1" fill="#e9e9e9" stroke="#999" stroke-width=".6"/><rect x="7.500" y="11" width="9" height="10" rx="1" fill="#e9e9e9" stroke="#999" stroke-width=".6"/><text x="5.500" y="9" font-family="Liberation Sans, sans-serif" font-size="7.500" font-weight="bold" fill="#d41f1f" text-anchor="middle">u</text><text x="18.500" y="9" font-family="Liberation Sans, sans-serif" font-size="7.500" font-weight="bold" fill="#d41f1f" text-anchor="middle">i</text><text x="12" y="19" font-family="Liberation Sans, sans-serif" font-size="7.500" font-weight="bold" fill="#d41f1f" text-anchor="middle">n</text></svg>
  <!-- teamviewer-like blue circle -->
  <svg class="abs" style="left:798px;top:8px" width="24" height="24" viewBox="0 0 24 24"><circle cx="12" cy="12" r="11.500" fill="#2a7ad9"/><rect x="5.500" y="6.500" width="13" height="8.500" fill="#fff"/><rect x="7" y="8" width="10" height="5.500" fill="#2a7ad9"/><path d="M9 18h6M12 15v3" stroke="#fff" stroke-width="1.600"/><path d="M8 12.500l6-4.500v4.500z" fill="#fff"/></svg>
  <!-- eta active -->
  <div class="abs" style="left:835px;top:0;width:48px;height:40px;background:#3b3b3b"></div>
  <svg class="abs" style="left:847px;top:8px" width="24" height="24" viewBox="0 0 24 24"><rect x=".5" y=".5" width="23" height="23" fill="#1f5a2c"/><rect x="2.500" y="2.500" width="19" height="19" fill="#e2e7e2" stroke="#7fae86"/><path d="M17.500 8V5H6.500l6 7-6 7h11v-3" fill="none" stroke="#123d1c" stroke-width="2.200"/></svg>
  <!-- paint -->
  <svg class="abs" style="left:893px;top:6px" width="28" height="28" viewBox="0 0 28 28"><path d="M13 7c7 0 11 4 11 9 0 3-3 3-5 3s-2 2-1 3 0 3-4 3C7 25 2 21 2 15S7 7 13 7z" fill="#dfe3ea" stroke="#9aa3b5" stroke-width=".7"/><circle cx="7" cy="13" r="2" fill="#e23a2e"/><circle cx="12" cy="10.500" r="2" fill="#f2c21c"/><circle cx="6.500" cy="18.500" r="2" fill="#3a7be0"/><circle cx="11" cy="21.500" r="2" fill="#39a845"/><path d="M26 1l1.500 1.500L17 18l-3 1.500 1-3z" fill="#c98a3c"/><path d="M26 1l1.500 1.500-2.500 3.700-1.800-1.500z" fill="#6b6b6b"/></svg>
  <!-- running indicators -->
  <div class="abs" style="left:447px;top:38px;width:40px;height:2px;background:#76b9ed"></div>
  <div class="abs" style="left:692px;top:38px;width:40px;height:2px;background:#76b9ed"></div>
  <div class="abs" style="left:741px;top:38px;width:40px;height:2px;background:#76b9ed"></div>
  <div class="abs" style="left:790px;top:38px;width:40px;height:2px;background:#76b9ed"></div>
  <div class="abs" style="left:835px;top:38px;width:48px;height:2px;background:#76b9ed"></div>
  <div class="abs" style="left:888px;top:38px;width:40px;height:2px;background:#76b9ed"></div>
  <!-- tray -->
  <svg class="abs" style="left:1135px;top:11px" width="18" height="18" viewBox="0 0 18 18" fill="none" stroke="#fff" stroke-width="1.300"><circle cx="12" cy="4.500" r="2.600"/><circle cx="5.500" cy="9" r="2.400"/><path d="M1.500 17c0-3.500 1.500-5 4-5s4 1.500 4 5M9.500 10c1-1.500 5.500-2 6.500 2"/></svg>
  <svg class="abs" style="left:1172px;top:15px" width="13" height="8" viewBox="0 0 13 8"><path d="M1 7l5.500-5.500 5.500 5.500" fill="none" stroke="#fff" stroke-width="1.300"/></svg>
  <svg class="abs" style="left:1194px;top:12px" width="18" height="16" viewBox="0 0 18 16" fill="none" stroke="#fff" stroke-width="1.200"><path d="M1 5.500h3l4-4v13l-4-4h-3z"/><path d="M10.500 5c1.200 1.500 1.200 4.500 0 6M13 3c2.200 2.500 2.200 7.500 0 10M15.500 1.500c3 3.500 3 9.500 0 13"/></svg>
  <svg class="abs" style="left:1220px;top:12px" width="17" height="17" viewBox="0 0 17 17" fill="none" stroke="#fff" stroke-width="1.300"><path d="M1.500 15.500C1.500 8 8 1.500 15.500 1.500" opacity=".55"/><path d="M5 15.500C5 10 10 5 15.500 5"/><path d="M8.500 15.500c0-3.500 3.500-7 7-7"/><circle cx="14" cy="14.500" r="1.300" fill="#fff" stroke="none"/></svg>
  <svg class="abs" style="left:1244px;top:15px" width="17" height="10" viewBox="0 0 17 10"><rect x=".6" y=".6" width="13.800" height="8.800" fill="none" stroke="#fff" stroke-width="1.200"/><rect x="2.500" y="2.500" width="7" height="5" fill="#fff"/><rect x="15" y="3" width="1.500" height="4" fill="#fff"/></svg>
  <svg class="abs" style="left:1266px;top:13px" width="17.500" height="13.500" viewBox="0 0 19 14"><path d="M5 13.500a4 4 0 0 1-.5-8A5.500 5.500 0 0 1 15 5a4.200 4.200 0 0 1-.5 8.500z" fill="#fff"/><path d="M9.500 11V6.500M7 8.500l2.500-2.500 2.500 2.500" fill="none" stroke="#0c0c0c" stroke-width="1.500"/></svg>
  <div class="t" style="left:1293px;top:14px;font-size:11.500px;letter-spacing:-.5px;color:#fff">ENG</div>
  <div class="t" style="left:1333px;top:5px;font-size:12px;letter-spacing:-.15px;color:#fff">9:07 AM</div>
  <div class="t" style="left:1329px;top:23px;font-size:12px;letter-spacing:-.28px;color:#fff">5/31/2018</div>
  <svg class="abs" style="left:1399px;top:11px" width="18" height="17" viewBox="0 0 18 17"><path d="M1 1h15v11h-3.500v4l-4-4H1z" fill="#fff"/><path d="M3.500 4h10M3.500 6.500h10M3.500 9h10" stroke="#0c0c0c" stroke-width="1"/></svg>
  <div class="abs" style="left:1406px;top:19px;width:16px;height:16px;border-radius:50%;background:#2b2b2b;border:1px solid #9a9a9a;color:#fff;font-size:11.500px;line-height:14px;text-align:center;font-weight:bold">9</div>
  <div class="abs" style="left:1435px;top:0;width:1px;height:40px;background:#6a6a6a"></div>
</div>

<!-- ================= FILE DROPDOWN MENU ================= -->
<div id="menu" class="abs">
<div class="strip"></div>
<div class="abs" style="left:1px;top:168px;width:243px;height:20px;border:1px solid #a9bce0;border-radius:2px;background:linear-gradient(#f3f6fd,#dfe7f7 45%,#c3d1ee)"></div>
<div class="mi" style="top:7px;letter-spacing:-0.275px">Tạo công trình mới</div>
<div class="sc" style="top:7px">Ctrl+N</div>
<div class="mi" style="top:35px;letter-spacing:-0.276px">Mở công trình cũ</div>
<div class="sc" style="top:35px">Ctrl+O</div>
<div class="mi" style="top:57px;letter-spacing:-0.234px">Mở công trình của PM dự toán khác</div>
<div class="mi" style="top:79px;letter-spacing:-0.211px">Mở công trình từ Excel</div>
<div class="mi" style="top:101px;letter-spacing:-0.187px">Lấy Excel vào Tiên lượng hiện tại</div>
<div class="mi" style="top:129px;letter-spacing:-0.306px">Save</div>
<div class="sc" style="top:129px">Ctrl+S</div>
<div class="mi" style="top:151px;letter-spacing:-0.246px">Save As ...</div>
<div class="mi" style="top:173px;letter-spacing:-0.216px">Backup công trình</div>
<div class="mi" style="top:201px;letter-spacing:-0.182px">Mở thư mục chứa công trình hiện tại</div>
<div class="mi" style="top:229px;letter-spacing:-0.159px">Lưu công trình ra file Excel</div>
<div class="mi" style="top:257px;letter-spacing:-0.336px">Xem trước khi in</div>
<div class="mi" style="top:285px;letter-spacing:0.016px">Thoát</div>
<div class="sep" style="top:26px"></div>
<div class="sep" style="top:120px"></div>
<div class="sep" style="top:192px"></div>
<div class="sep" style="top:220px"></div>
<div class="sep" style="top:248px"></div>
<div class="sep" style="top:276px"></div>
<div class="abs" style="left:229px;top:58px;border:4px solid transparent;border-left:4px solid #000;border-right:none;width:0;height:0"></div>
<svg class="abs" style="left:3px;top:4px" width="18" height="17" viewBox="0 0 18 17"><rect x="7" y="3" width="10" height="11" fill="#dbe7fb" stroke="#3b64b8"/><rect x="7" y="3" width="10" height="3" fill="#3b64b8"/><rect x="3" y="8" width="8" height="7" fill="#f4f8ff" stroke="#3b64b8"/><path d="M4.500 10.500h5M4.500 12.500h5" stroke="#6d8fd4"/><path d="M4 0v7M.5 3.500h7M1.500 1l5 5M6.500 1l-5 5" stroke="#f2c313" stroke-width="1.200"/></svg>
<svg class="abs" style="left:3px;top:32px" width="18" height="17" viewBox="0 0 18 17"><path d="M1.500 14.500v-9h5l1.500 2h6v2" fill="#f8e08a" stroke="#b98a1c"/><path d="M1.500 14.500l3-6h12.500l-3.500 6z" fill="#fbd64f" stroke="#b98a1c"/><path d="M9 3c2-2.500 5-2.500 6.500 0" fill="none" stroke="#555" stroke-width="1"/><path d="M16.500 1v3h-3z" fill="#555"/></svg>
<svg class="abs" style="left:3px;top:76px" width="18" height="17" viewBox="0 0 18 17"><rect x="1" y="1" width="15" height="15" fill="#e4efe2" stroke="#3f7f41" stroke-width="1.400"/><rect x="3" y="3" width="11" height="11" fill="#d5e9d2" stroke="#8fbf8f" stroke-width=".7"/><path d="M4.500 5l8 7M12.500 5l-8 7" stroke="#2a7d31" stroke-width="2.600"/><path d="M5 5l7.500 6.500" stroke="#8fd08f" stroke-width=".7"/></svg>
<svg class="abs" style="left:3px;top:98px" width="18" height="17" viewBox="0 0 18 17"><rect x="1" y="1" width="15" height="15" fill="#e4efe2" stroke="#3f7f41" stroke-width="1.400"/><rect x="3" y="3" width="11" height="11" fill="#d5e9d2" stroke="#8fbf8f" stroke-width=".7"/><path d="M4.500 5l8 7M12.500 5l-8 7" stroke="#2a7d31" stroke-width="2.600"/><path d="M5 5l7.500 6.500" stroke="#8fd08f" stroke-width=".7"/></svg>
<svg class="abs" style="left:3px;top:226px" width="18" height="17" viewBox="0 0 18 17"><rect x="1" y="1" width="15" height="15" fill="#e4efe2" stroke="#3f7f41" stroke-width="1.400"/><rect x="3" y="3" width="11" height="11" fill="#d5e9d2" stroke="#8fbf8f" stroke-width=".7"/><path d="M4.500 5l8 7M12.500 5l-8 7" stroke="#2a7d31" stroke-width="2.600"/><path d="M5 5l7.500 6.500" stroke="#8fd08f" stroke-width=".7"/></svg>
<svg class="abs" style="left:3px;top:126px" width="18" height="17" viewBox="0 0 18 17"><rect x="2" y="1" width="14" height="14" rx="1" fill="#3f48c8" stroke="#23297f"/><rect x="4.500" y="1.500" width="9" height="6" fill="#fff"/><rect x="5" y="10" width="8" height="5" fill="#1c1f5a"/><rect x="6.500" y="11" width="2" height="3" fill="#fff"/></svg>
<svg class="abs" style="left:3px;top:170px" width="18" height="17" viewBox="0 0 18 17"><path d="M1.500 14.500v-10.500l2-2h4.500l1.500 2h7v10.500z" fill="#7f9dc0" stroke="#5c7da6"/><rect x="1.500" y="6" width="15" height="8.500" rx="1" fill="#a9c1dc" stroke="#5c7da6"/><path d="M6 10.500a3 2.200 0 1 0 1.200-1.900" fill="none" stroke="#4f6f97" stroke-width="1.100"/><path d="M5.300 7.500l2.300.8-1.700 1.600z" fill="#4f6f97"/></svg>
<svg class="abs" style="left:3px;top:254px" width="18" height="17" viewBox="0 0 18 17"><path d="M3 1.500h7l3 3v10h-10z" fill="#fff" stroke="#777"/><path d="M10 1.500v3h3" fill="none" stroke="#777"/><circle cx="10" cy="9" r="3.300" fill="#dbeafc" stroke="#555"/><path d="M12.500 11.500l3.500 3.500" stroke="#d99a2b" stroke-width="2"/></svg>
</div>
<!-- ================= RED ANNOTATIONS ================= -->
<svg class="abs" style="left:0;top:0" width="320" height="270" viewBox="0 0 320 270">
<ellipse cx="27" cy="41.700" rx="23.300" ry="25.800" fill="none" stroke="#e8202a" stroke-width="5.500"/>
<path d="M0.5 224.9a131.1 28.2 0 1 0 262.2 0a131.1 28.2 0 1 0 -262.2 0zM5.4 224.7a125.7 23.2 0 1 0 251.4 0a125.7 23.2 0 1 0 -251.4 0z" fill="#e8202a" fill-rule="evenodd"/>
<text x="58.500" y="63.300" font-family="Liberation Serif, serif" font-weight="bold" font-size="24" fill="#e8202a" letter-spacing="-.4">Bước 1</text>
<text x="231" y="203.500" font-family="Liberation Serif, serif" font-weight="bold" font-size="24" fill="#e8202a" letter-spacing="-.4">Bước 2</text>
</svg>

</body>
</html>
